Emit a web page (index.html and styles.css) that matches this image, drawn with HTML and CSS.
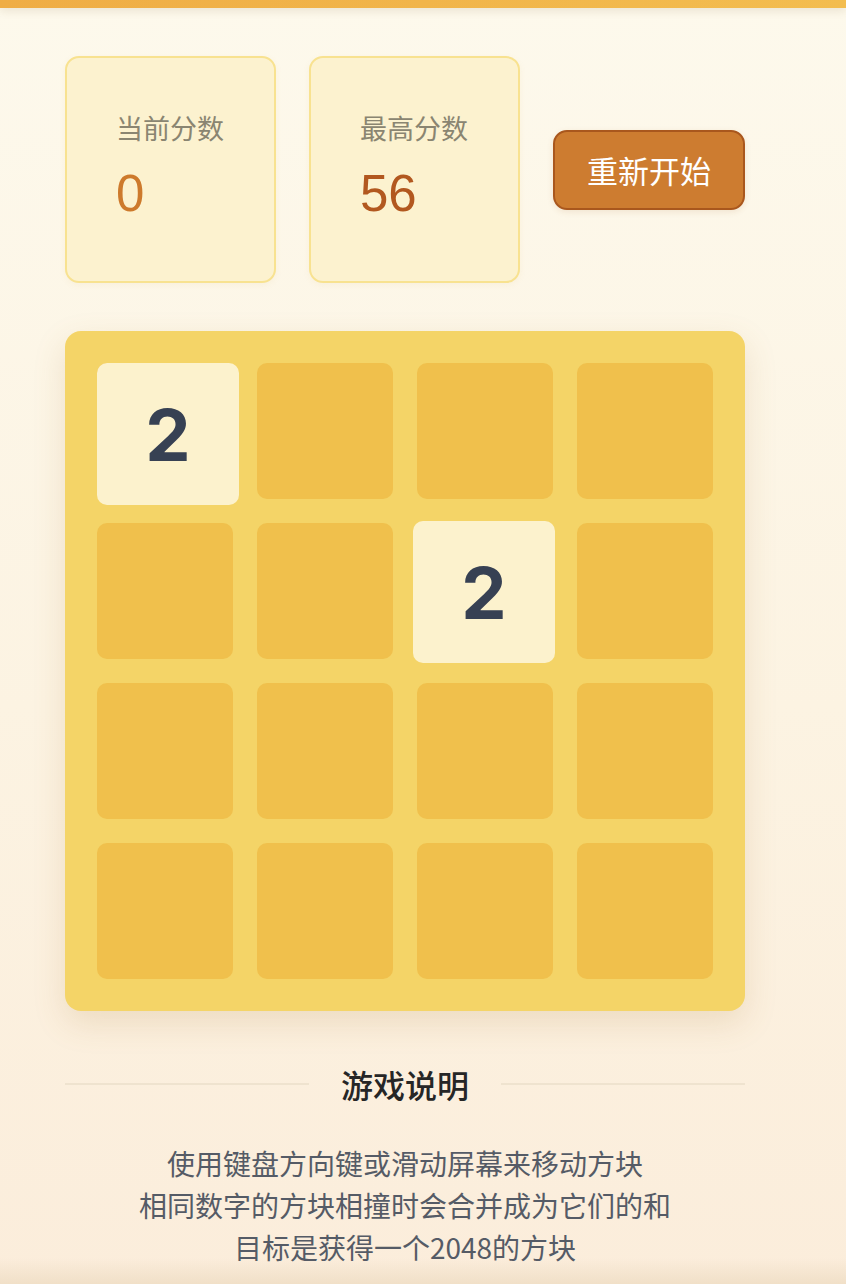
FILE: index.html
```html
<!DOCTYPE html>
<html lang="zh-CN">
<head>
<meta charset="utf-8">
<title>2048</title>
<link rel="stylesheet" href="styles.css">
</head>
<body>
<div class="topbar"></div>
<main class="page">
  <section class="scores">
    <div class="score-card">
      <div class="score-label">当前分数</div>
      <div class="score-value current">0</div>
    </div>
    <div class="score-card">
      <div class="score-label">最高分数</div>
      <div class="score-value best">56</div>
    </div>
    <button class="restart">重新开始</button>
  </section>

  <section class="board">
    <div class="cell"><div class="tile tile-a">2</div></div>
    <div class="cell"></div>
    <div class="cell"></div>
    <div class="cell"></div>
    <div class="cell"></div>
    <div class="cell"></div>
    <div class="cell"><div class="tile tile-b">2</div></div>
    <div class="cell"></div>
    <div class="cell"></div>
    <div class="cell"></div>
    <div class="cell"></div>
    <div class="cell"></div>
    <div class="cell"></div>
    <div class="cell"></div>
    <div class="cell"></div>
    <div class="cell"></div>
  </section>

  <section class="help">
    <div class="help-title">
      <span class="rule"></span>
      <h2>游戏说明</h2>
      <span class="rule"></span>
    </div>
    <p class="help-text">使用键盘方向键或滑动屏幕来移动方块<br>相同数字的方块相撞时会合并成为它们的和<br>目标是获得一个2048的方块</p>
  </section>
</main>
</body>
</html>
```

FILE: styles.css
```css
html {
  height: 100%;
}
body {
  margin: 0;
  min-height: 100vh;
  font-family: "Liberation Sans", "Noto Sans CJK SC", sans-serif;
  background:
    linear-gradient(180deg, rgba(0,0,0,0) calc(100% - 26px), rgba(214,190,150,0.28) 100%),
    linear-gradient(180deg, #fdf9ec 0%, #fcf3e2 55%, #fbeddb 100%);
}
.topbar {
  height: 8px;
  background: linear-gradient(90deg, #efad45 0%, #f3bd4f 100%);
  box-shadow: 0 3px 8px rgba(120, 90, 40, 0.14);
}
.page {
  width: 680px;
  padding: 48px 0 0 65px;
}
.scores {
  display: flex;
  align-items: center;
  gap: 33px;
}
.score-card {
  box-sizing: border-box;
  width: 211px;
  height: 227px;
  padding: 50px 0 0 49px;
  background: #fcf2cf;
  border: 2px solid #f8e290;
  border-radius: 14px;
  box-shadow: 0 2px 6px rgba(200, 160, 80, 0.08);
}
.score-label {
  font-family: "Noto Sans CJK SC", sans-serif;
  font-size: 27px;
  line-height: 40px;
  color: #8a8571;
}
.score-value {
  margin-top: 16px;
  font-size: 51px;
  line-height: 60px;
}
.score-value.current {
  color: #cd7a2c;
}
.score-value.best {
  color: #b2581f;
}
.restart {
  box-sizing: border-box;
  width: 192px;
  height: 80px;
  padding: 0;
  background: #cd7c30;
  border: 2px solid #a9571d;
  border-radius: 14px;
  color: #ffffff;
  font-family: "Noto Sans CJK SC", sans-serif;
  font-size: 31px;
  box-shadow: 0 2px 6px rgba(160, 90, 30, 0.12);
}
.board {
  box-sizing: border-box;
  width: 680px;
  height: 680px;
  margin-top: 48px;
  padding: 32px;
  display: grid;
  grid-template-columns: repeat(4, 136px);
  grid-template-rows: repeat(4, 136px);
  gap: 24px;
  background: #f4d467;
  border-radius: 16px;
  box-shadow: 0 12px 32px rgba(170, 130, 60, 0.18);
}
.cell {
  position: relative;
  background: #f0c04c;
  border-radius: 10px;
}
.tile {
  position: absolute;
  width: 142px;
  height: 142px;
  display: flex;
  align-items: center;
  justify-content: center;
  background: #fcf2cd;
  border-radius: 10px;
  font-family: Inter, "Liberation Sans", sans-serif;
  font-weight: 700;
  font-size: 72px;
  color: #374153;
}
.tile-a {
  left: 0;
  top: 0;
}
.tile-b {
  left: -4px;
  top: -2px;
}
.help {
  margin-top: 51px;
}
.help-title {
  display: flex;
  align-items: center;
  gap: 32px;
}
.rule {
  flex: 1;
  height: 2px;
  background: #efe3cf;
}
.help-title h2 {
  margin: 0;
  font-family: "Noto Sans CJK SC", sans-serif;
  font-size: 32px;
  line-height: 44px;
  font-weight: 500;
  color: #262626;
}
.help-text {
  margin: 36px 0 0;
  text-align: center;
  font-family: "Noto Sans CJK SC", sans-serif;
  font-size: 28px;
  line-height: 42px;
  color: #555b66;
}
```
